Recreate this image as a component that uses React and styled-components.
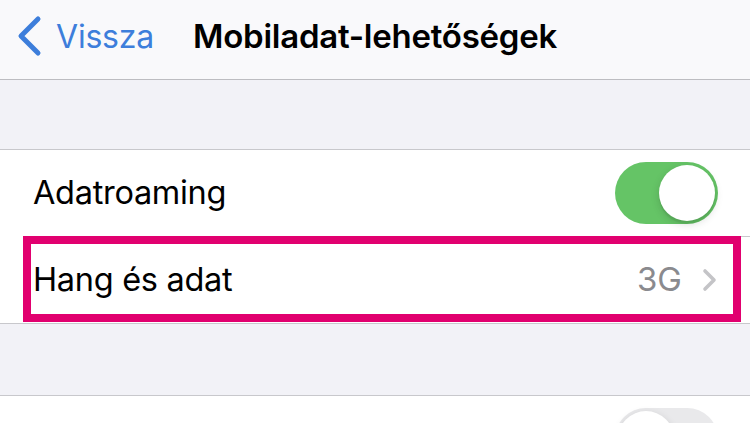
import React from "react";
import styled, { createGlobalStyle } from "styled-components";

const Global = createGlobalStyle`
  html, body { margin: 0; padding: 0; }
  body {
    background: #f2f2f7;
    font-family: Inter, "Noto Sans", "Liberation Sans", sans-serif;
    -webkit-font-smoothing: antialiased;
  }
`;

const Screen = styled.div`
  width: 750px;
  height: 423px;
  overflow: hidden;
  background: #f2f2f7;
  display: flex;
  flex-direction: column;
`;

const NavBar = styled.header`
  height: 79px;
  flex: none;
  background: #f9f9fb;
  border-bottom: 1px solid #bdbdc1;
  display: grid;
  grid-template-columns: 1fr auto 1fr;
  align-items: center;
`;

const BackButton = styled.div`
  display: flex;
  align-items: center;
  gap: 14px;
  padding-left: 16px;
  color: #3d7edb;
  font-size: 32px;
  letter-spacing: -0.2px;
  padding-bottom: 7px;
`;

const Title = styled.h1`
  margin: 0;
  font-size: 33px;
  font-weight: 600;
  color: #000;
  letter-spacing: -0.25px;
  padding-bottom: 8px;
`;

const Gap = styled.div`
  height: ${(p) => p.h}px;
  flex: none;
  background: #f2f2f7;
  border-bottom: 1px solid #c8c8cc;
`;

const Group = styled.section`
  background: #fff;
  border-bottom: 1px solid #c8c8cc;
  flex: none;
`;

const Row = styled.div`
  position: relative;
  height: ${(p) => p.h || 86}px;
  display: flex;
  align-items: ${(p) => (p.top ? "flex-start" : "center")};
  padding: ${(p) => (p.top ? "12px 32px 0 33px" : "0 32px 0 33px")};
  box-sizing: border-box;
  ${(p) =>
    p.sep
      ? `&::after { content: ""; position: absolute; left: 33px; right: 0; bottom: -1px; height: 1px; background: #c8c8cc; }`
      : ""}
  & + & { margin-top: 1px; }
`;

const Label = styled.span`
  flex: 1;
  font-size: 32.5px;
  color: #000;
  letter-spacing: -0.3px;
  padding-bottom: 2px;
`;

const Value = styled.span`
  font-size: 33px;
  color: #8a8a8e;
  margin-right: 20px;
  padding-bottom: 2px;
`;

const Track = styled.div`
  width: 103px;
  height: 62px;
  border-radius: 31px;
  background: ${(p) => (p.on ? "#65c466" : "#e9e9eb")};
  position: relative;
  flex: none;
`;

const Knob = styled.div`
  position: absolute;
  top: 3px;
  ${(p) => (p.on ? "right: 3px;" : "left: 3px;")}
  width: 56px;
  height: 56px;
  border-radius: 50%;
  background: #fff;
  box-shadow: 0 3px 8px rgba(0, 0, 0, 0.15), 0 3px 1px rgba(0, 0, 0, 0.06);
`;

const Highlight = styled.div`
  position: absolute;
  left: 23px;
  right: 9px;
  top: -1px;
  bottom: 1px;
  border: 8px solid #e1006f;
  pointer-events: none;
`;

const Toggle = ({ on }) => (
  <Track on={on ? 1 : 0}>
    <Knob on={on ? 1 : 0} />
  </Track>
);

export default function App() {
  return (
    <Screen>
      <Global />
      <NavBar>
        <BackButton>
          <svg width="26" height="42" viewBox="0 0 26 42">
            <path
              d="M22 4 L5 21 L22 38"
              fill="none"
              stroke="#3d7edb"
              strokeWidth="5"
              strokeLinecap="round"
              strokeLinejoin="round"
            />
          </svg>
          Vissza
        </BackButton>
        <Title>Mobiladat-lehetőségek</Title>
        <div />
      </NavBar>
      <Gap h={69} />
      <Group>
        <Row sep>
          <Label>Adatroaming</Label>
          <Toggle on />
        </Row>
        <Row>
          <Label>Hang és adat</Label>
          <Value>3G</Value>
          <svg width="16" height="24" viewBox="0 0 16 24">
            <path
              d="M3 3 L12 12 L3 21"
              fill="none"
              stroke="#c4c4c7"
              strokeWidth="3.6"
              strokeLinecap="round"
              strokeLinejoin="round"
            />
          </svg>
          <Highlight />
        </Row>
      </Group>
      <Gap h={71} />
      <Group>
        <Row top h={86}>
          <Label />
          <Toggle />
        </Row>
      </Group>
    </Screen>
  );
}
